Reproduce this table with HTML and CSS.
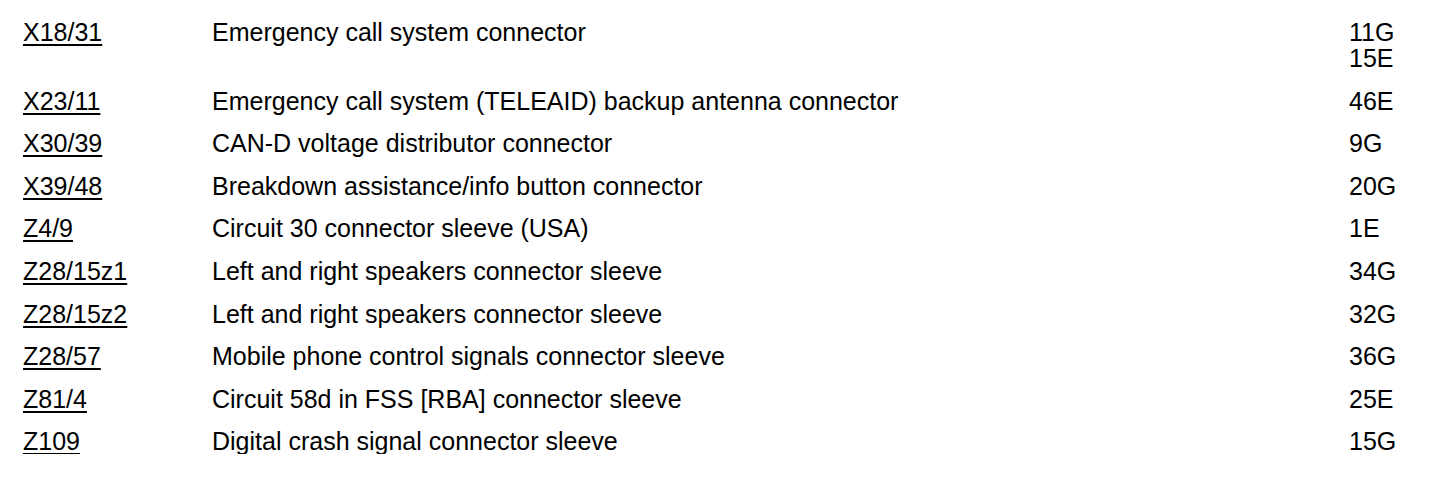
FILE: index.html
```html
<!DOCTYPE html>
<html lang="en">
<head>
<meta charset="utf-8">
<title>Connectors</title>
<link rel="stylesheet" href="styles.css">
</head>
<body>
<div class="list">
  <a class="code" href="#">X18/31</a>
  <div class="desc">Emergency call system connector</div>
  <div class="loc">11G<br>15E</div>

  <a class="code" href="#">X23/11</a>
  <div class="desc">Emergency call system (TELEAID) backup antenna connector</div>
  <div class="loc">46E</div>

  <a class="code" href="#">X30/39</a>
  <div class="desc">CAN-D voltage distributor connector</div>
  <div class="loc">9G</div>

  <a class="code" href="#">X39/48</a>
  <div class="desc">Breakdown assistance/info button connector</div>
  <div class="loc">20G</div>

  <a class="code" href="#">Z4/9</a>
  <div class="desc">Circuit 30 connector sleeve (USA)</div>
  <div class="loc">1E</div>

  <a class="code" href="#">Z28/15z1</a>
  <div class="desc">Left and right speakers connector sleeve</div>
  <div class="loc">34G</div>

  <a class="code" href="#">Z28/15z2</a>
  <div class="desc">Left and right speakers connector sleeve</div>
  <div class="loc">32G</div>

  <a class="code" href="#">Z28/57</a>
  <div class="desc">Mobile phone control signals connector sleeve</div>
  <div class="loc">36G</div>

  <a class="code" href="#">Z81/4</a>
  <div class="desc">Circuit 58d in FSS [RBA] connector sleeve</div>
  <div class="loc">25E</div>

  <a class="code" href="#">Z109</a>
  <div class="desc">Digital crash signal connector sleeve</div>
  <div class="loc">15G</div>
</div>
</body>
</html>
```

FILE: styles.css
```css
html, body {
  margin: 0;
  padding: 0;
  background: #ffffff;
}

body {
  font-family: "Liberation Sans", Arial, sans-serif;
  font-size: 25px;
  line-height: 26px;
  color: #000000;
}

.list {
  display: grid;
  grid-template-columns: 189px 1137px 1fr;
  row-gap: 16.6px;
  padding: 19px 0 0 23px;
}

.code {
  color: #000000;
  text-decoration: underline;
  text-underline-offset: 3px;
  justify-self: start;
}

.desc,
.loc {
  white-space: nowrap;
}
```
